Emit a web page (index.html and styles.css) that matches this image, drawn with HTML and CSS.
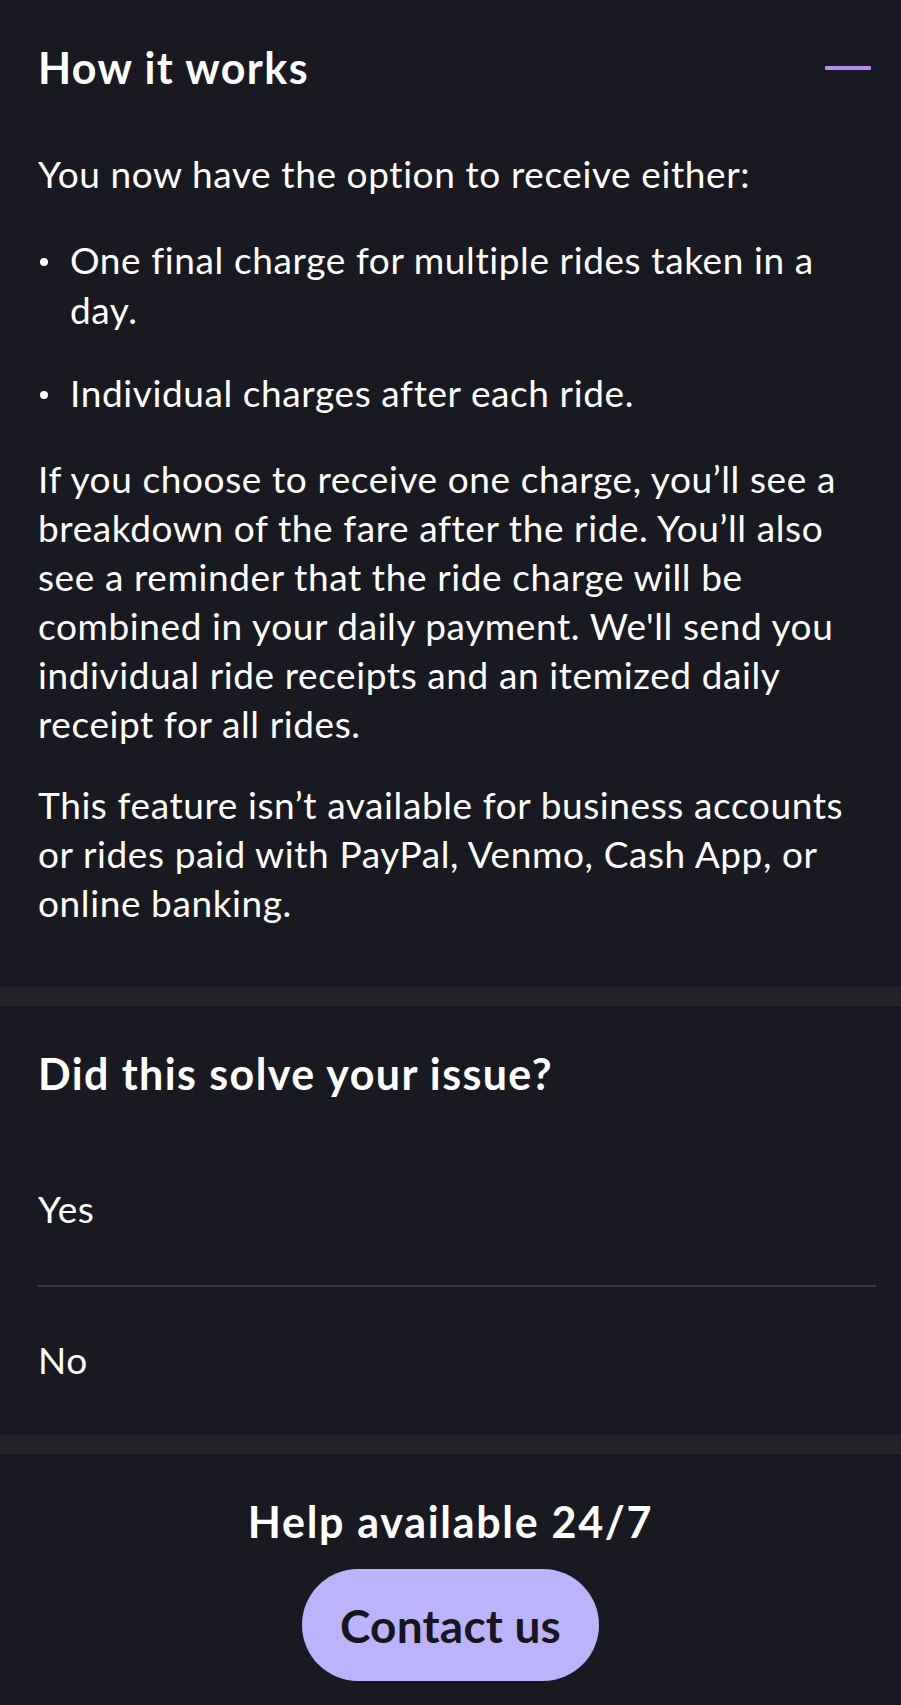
FILE: index.html
```html
<!DOCTYPE html>
<html lang="en">
<head>
<meta charset="utf-8">
<title>How it works</title>
<link rel="stylesheet" href="styles.css">
</head>
<body>
<main class="page">
  <section class="article">
    <header class="article-head">
      <h1 class="title">How it works</h1>
      <span class="collapse" aria-label="Collapse"></span>
    </header>
    <p class="text">You now have the option to receive either:</p>
    <ul class="bullets">
      <li>One final charge for multiple rides taken in a day.</li>
      <li>Individual charges after each ride.</li>
    </ul>
    <p class="text">If you choose to receive one charge, you’ll see a breakdown of the fare after the ride. You’ll also see a reminder that the ride charge will be combined in your daily payment. We'll send you individual ride receipts and an itemized daily receipt for all rides.</p>
    <p class="text">This feature isn’t available for business accounts or rides paid with PayPal, Venmo, Cash App, or online banking.</p>
  </section>
  <div class="band"></div>
  <section class="feedback">
    <h2 class="title">Did this solve your issue?</h2>
    <div class="options">
      <div class="option">Yes</div>
      <div class="option">No</div>
    </div>
  </section>
  <div class="band"></div>
  <section class="help">
    <h2 class="help-title">Help available 24/7</h2>
    <button class="contact">Contact us</button>
  </section>
</main>
</body>
</html>
```

FILE: styles.css
```css
* { box-sizing: border-box; }
html, body {
  margin: 0;
  padding: 0;
  background: #191a21;
}
body {
  font-family: Lato, "Liberation Sans", sans-serif;
  color: #ffffff;
}
.page {
  display: flex;
  flex-direction: column;
  min-height: 1705px;
}
.article {
  padding: 43px 25px 60px 38px;
}
.article-head {
  display: flex;
  justify-content: space-between;
  align-items: center;
  height: 50px;
  margin-bottom: 56px;
}
.title {
  margin: 0;
  font-size: 43px;
  font-weight: 700;
  letter-spacing: 1.4px;
  line-height: 50px;
}
.collapse {
  display: block;
  width: 46px;
  height: 4px;
  margin-right: 5px;
  background: #b98cf5;
  border-radius: 1px;
}
.text {
  margin: 0 0 32px;
  font-size: 37px;
  letter-spacing: 0.6px;
  line-height: 49px;
}
.text:last-child { margin-bottom: 0; }
.text + .bullets { margin-top: 37px; }
.bullets {
  margin: 0 0 36px;
  padding: 0;
  list-style: none;
  display: flex;
  flex-direction: column;
  gap: 33px;
}
.bullets li {
  position: relative;
  padding-left: 32px;
  font-size: 37px;
  letter-spacing: 0.6px;
  line-height: 50px;
}
.bullets li::before {
  content: "";
  position: absolute;
  left: 2px;
  top: 23px;
  width: 8px;
  height: 8px;
  border-radius: 50%;
  background: #ffffff;
}
.band {
  height: 19px;
  background: #222329;
}
.feedback {
  padding: 43px 25px 0 38px;
}
.options {
  display: flex;
  flex-direction: column;
  margin-top: 36px;
}
.option {
  height: 150px;
  display: flex;
  align-items: center;
  padding-bottom: 4px;
  font-size: 37px;
  letter-spacing: 0.6px;
}
.option + .option {
  border-top: 2px solid #3a3b41;
}
.help {
  flex: 1;
  display: flex;
  flex-direction: column;
  align-items: center;
  padding-top: 43px;
}
.help-title {
  margin: 0;
  font-size: 43px;
  font-weight: 700;
  letter-spacing: 1.7px;
  line-height: 50px;
}
.contact {
  margin-top: 22px;
  width: 297px;
  height: 112px;
  border: none;
  border-radius: 56px;
  background: #bcb3fd;
  color: #16161c;
  font-family: Lato, "Liberation Sans", sans-serif;
  font-size: 46px;
  font-weight: 700;
  letter-spacing: 0.2px;
  cursor: pointer;
}
```
